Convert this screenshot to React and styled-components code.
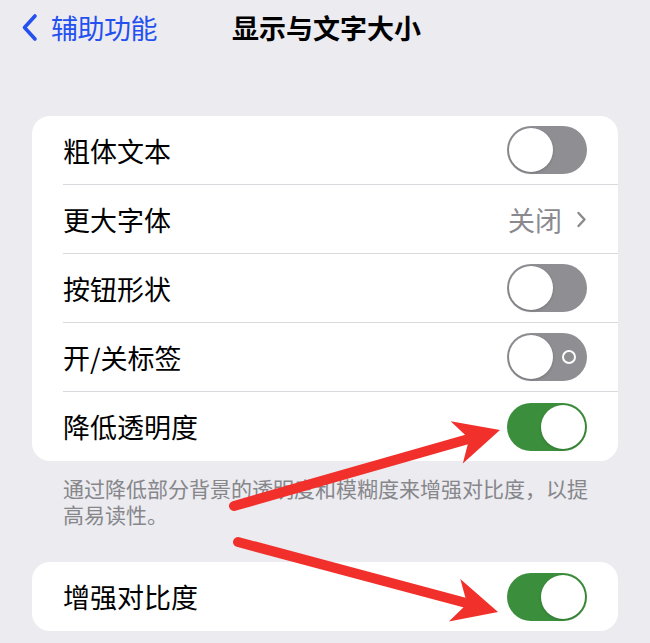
import React from "react";
import styled, { createGlobalStyle } from "styled-components";

const GlobalStyle = createGlobalStyle`
  html, body {
    margin: 0;
    padding: 0;
    background: #ebebf0;
  }
  body {
    font-family: "Noto Sans CJK SC", "Noto Sans", sans-serif;
    -webkit-font-smoothing: antialiased;
  }
`;

const rows = [
  { label: "粗体文本", kind: "toggle", on: false },
  { label: "更大字体", kind: "value", value: "关闭" },
  { label: "按钮形状", kind: "toggle", on: false },
  { label: "开/关标签", kind: "toggle", on: false, labels: true },
  { label: "降低透明度", kind: "toggle", on: true },
];

export default function App() {
  return (
    <Page>
      <GlobalStyle />
      <Nav>
        <Back>
          <svg width="17" height="29" viewBox="0 0 17 29">
            <path d="M14 3 L3.5 14.5 L14 26" fill="none" stroke="#2450ef" strokeWidth="3.6" strokeLinecap="round" strokeLinejoin="round" />
          </svg>
          <BackText>辅助功能</BackText>
        </Back>
        <Title>显示与文字大小</Title>
      </Nav>

      <Card>
        {rows.map((r, i) => (
          <Row key={r.label} $last={i === rows.length - 1}>
            <Label>{r.label}</Label>
            {r.kind === "toggle" ? (
              <Toggle on={r.on} labels={r.labels} />
            ) : (
              <Value>
                {r.value}
                <svg width="11" height="17" viewBox="0 0 11 17">
                  <path d="M2.5 2 L8.5 8.5 L2.5 15" fill="none" stroke="#8a8a8e" strokeWidth="2.4" strokeLinecap="round" strokeLinejoin="round" />
                </svg>
              </Value>
            )}
          </Row>
        ))}
      </Card>

      <Footnote>通过降低部分背景的透明度和模糊度来增强对比度，以提高易读性。</Footnote>

      <Card $gap>
        <Row $last>
          <Label>增强对比度</Label>
          <Toggle on />
        </Row>
      </Card>

      <Arrows width="650" height="643" viewBox="0 0 650 643">
        <line x1="234" y1="506" x2="472" y2="438" stroke="#f2302b" strokeWidth="10" strokeLinecap="round" />
        <polygon points="500,430 450.6,421.2 469.2,438.8 462.8,463.6" fill="#f2302b" />
        <line x1="238" y1="542" x2="470" y2="604" stroke="#f2302b" strokeWidth="10" strokeLinecap="round" />
        <polygon points="498,612 460.3,579.1 467.1,603.7 448.9,621.5" fill="#f2302b" />
      </Arrows>
    </Page>
  );
}

function Toggle({ on, labels }) {
  return (
    <Track $on={on}>
      <Knob />
      {labels && !on && <OffMark />}
    </Track>
  );
}

const Page = styled.div`
  position: relative;
  width: 650px;
  height: 643px;
  overflow: hidden;
  padding: 0 32px;
  box-sizing: border-box;
`;

const Nav = styled.div`
  height: 54px;
  display: flex;
  align-items: center;
  margin: 0 -32px 62px;
  padding-left: 21px;
`;

const Back = styled.div`
  display: flex;
  align-items: center;
  gap: 13px;
  width: 211px;
`;

const BackText = styled.span`
  font-size: 27px;
  color: #2450ef;
  letter-spacing: -0.5px;
`;

const Title = styled.span`
  font-size: 27px;
  font-weight: 600;
  color: #000;
`;

const Card = styled.div`
  background: #fff;
  border-radius: 18px;
  overflow: hidden;
  margin-top: ${(p) => (p.$gap ? "35px" : "0")};
`;

const Row = styled.div`
  height: 69px;
  margin-left: 31px;
  padding-right: 31px;
  display: flex;
  align-items: center;
  justify-content: space-between;
  box-sizing: border-box;
  border-bottom: ${(p) => (p.$last ? "none" : "1px solid #d9d9dd")};
`;

const Label = styled.span`
  font-size: 27px;
  color: #000;
`;

const Value = styled.span`
  display: flex;
  align-items: center;
  gap: 14px;
  font-size: 27px;
  color: #8a8a8e;
`;

const Track = styled.span`
  width: 80px;
  height: 48px;
  border-radius: 24px;
  box-sizing: border-box;
  padding: 2px;
  display: flex;
  align-items: center;
  justify-content: ${(p) => (p.$on ? "flex-end" : "flex-start")};
  background: ${(p) => (p.$on ? "#3b8e3b" : "#8e8e93")};
`;

const Knob = styled.span`
  width: 44px;
  height: 44px;
  border-radius: 50%;
  background: #fff;
  box-shadow: 0 1px 3px rgba(0, 0, 0, 0.18);
`;

const OffMark = styled.span`
  width: 10px;
  height: 10px;
  margin-left: 9px;
  border: 2px solid #fff;
  border-radius: 50%;
`;

const Footnote = styled.p`
  margin: 0;
  padding: 14px 25px 0 31px;
  font-size: 21px;
  line-height: 26px;
  color: #86868b;
`;

const Arrows = styled.svg`
  position: absolute;
  left: 0;
  top: 0;
  pointer-events: none;
`;
